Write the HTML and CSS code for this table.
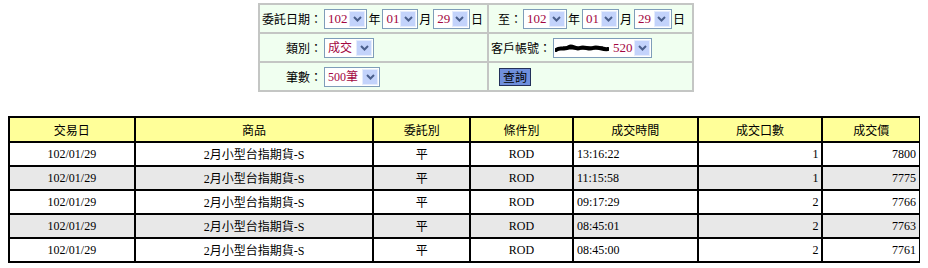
FILE: index.html
```html
<!DOCTYPE html>
<html lang="zh-Hant">
<head>
<meta charset="utf-8">
<title>成交查詢</title>
<link rel="stylesheet" href="styles.css">
</head>
<body>
<div class="form">
  <div class="fcell">
    <span class="lbl">委託日期：</span>
    <span class="sel w45"><span class="val">102</span><span class="dd"><svg width="9" height="6" viewBox="0 0 9 6"><path d="M1 1 L4.5 4.5 L8 1" fill="none" stroke="#4a5f8c" stroke-width="2"/></svg></span></span><span class="unit">年</span>
    <span class="sel w37"><span class="val">01</span><span class="dd"><svg width="9" height="6" viewBox="0 0 9 6"><path d="M1 1 L4.5 4.5 L8 1" fill="none" stroke="#4a5f8c" stroke-width="2"/></svg></span></span><span class="unit">月</span>
    <span class="sel w38"><span class="val">29</span><span class="dd"><svg width="9" height="6" viewBox="0 0 9 6"><path d="M1 1 L4.5 4.5 L8 1" fill="none" stroke="#4a5f8c" stroke-width="2"/></svg></span></span><span class="unit">日</span>
  </div>
  <div class="fcell end">
    <span class="lbl2">至：</span>
    <span class="sel w44"><span class="val">102</span><span class="dd"><svg width="9" height="6" viewBox="0 0 9 6"><path d="M1 1 L4.5 4.5 L8 1" fill="none" stroke="#4a5f8c" stroke-width="2"/></svg></span></span><span class="unit">年</span>
    <span class="sel w37"><span class="val">01</span><span class="dd"><svg width="9" height="6" viewBox="0 0 9 6"><path d="M1 1 L4.5 4.5 L8 1" fill="none" stroke="#4a5f8c" stroke-width="2"/></svg></span></span><span class="unit">月</span>
    <span class="sel w38"><span class="val">29</span><span class="dd"><svg width="9" height="6" viewBox="0 0 9 6"><path d="M1 1 L4.5 4.5 L8 1" fill="none" stroke="#4a5f8c" stroke-width="2"/></svg></span></span><span class="unit">日</span>
  </div>
  <div class="fcell">
    <span class="lbl">類別：</span>
    <span class="sel w50"><span class="val cjk">成交</span><span class="dd"><svg width="9" height="6" viewBox="0 0 9 6"><path d="M1 1 L4.5 4.5 L8 1" fill="none" stroke="#4a5f8c" stroke-width="2"/></svg></span></span>
  </div>
  <div class="fcell">
    <span class="lbl">客戶帳號：</span>
    <span class="sel w99"><span class="val acct"><svg class="redact" width="54" height="10" viewBox="0 0 54 10"><path d="M1 7 C6 3 9 8 14 4 C18 2 20 7 25 5 C30 3 33 7 38 5 C43 3 47 7 53 6" fill="none" stroke="#000" stroke-width="4" stroke-linecap="round"/><path d="M8 5 L48 5" stroke="#000" stroke-width="3"/></svg><span>520</span></span><span class="dd"><svg width="9" height="6" viewBox="0 0 9 6"><path d="M1 1 L4.5 4.5 L8 1" fill="none" stroke="#4a5f8c" stroke-width="2"/></svg></span></span>
  </div>
  <div class="fcell">
    <span class="lbl">筆數：</span>
    <span class="sel w56"><span class="val cjk">500筆</span><span class="dd"><svg width="9" height="6" viewBox="0 0 9 6"><path d="M1 1 L4.5 4.5 L8 1" fill="none" stroke="#4a5f8c" stroke-width="2"/></svg></span></span>
  </div>
  <div class="fcell">
    <button class="btn" type="button">查詢</button>
  </div>
</div>

<table class="grid">
  <colgroup>
    <col class="c1"><col class="c2"><col class="c3"><col class="c4"><col class="c5"><col class="c6"><col class="c7">
  </colgroup>
  <thead>
    <tr><th>交易日</th><th>商品</th><th>委託別</th><th>條件別</th><th>成交時間</th><th>成交口數</th><th>成交價</th></tr>
  </thead>
  <tbody>
    <tr><td class="ctr">102/01/29</td><td class="ctr">2月小型台指期貨-S</td><td class="ctr">平</td><td class="ctr">ROD</td><td>13:16:22</td><td class="rt">1</td><td class="rt">7800</td></tr>
    <tr class="alt"><td class="ctr">102/01/29</td><td class="ctr">2月小型台指期貨-S</td><td class="ctr">平</td><td class="ctr">ROD</td><td>11:15:58</td><td class="rt">1</td><td class="rt">7775</td></tr>
    <tr><td class="ctr">102/01/29</td><td class="ctr">2月小型台指期貨-S</td><td class="ctr">平</td><td class="ctr">ROD</td><td>09:17:29</td><td class="rt">2</td><td class="rt">7766</td></tr>
    <tr class="alt"><td class="ctr">102/01/29</td><td class="ctr">2月小型台指期貨-S</td><td class="ctr">平</td><td class="ctr">ROD</td><td>08:45:01</td><td class="rt">2</td><td class="rt">7763</td></tr>
    <tr><td class="ctr">102/01/29</td><td class="ctr">2月小型台指期貨-S</td><td class="ctr">平</td><td class="ctr">ROD</td><td>08:45:00</td><td class="rt">2</td><td class="rt">7761</td></tr>
  </tbody>
</table>
</body>
</html>
```

FILE: styles.css
```css
body {
  margin: 3px 8px 8px 8px;
  background: #fff;
  font-family: "Liberation Serif", "Noto Sans CJK TC", serif;
  font-size: 12px;
  color: #000;
}

.form {
  display: grid;
  grid-template-columns: 227px 203px;
  grid-auto-rows: 27px;
  gap: 2px;
  padding: 2px;
  width: fit-content;
  background: #c4c6c4;
  margin-left: 250px;
}

.fcell {
  background: #f0fff0;
  display: flex;
  align-items: center;
  padding: 0 2px;
  font-family: "Noto Sans CJK TC", sans-serif;
  font-size: 12px;
  white-space: nowrap;
}

.fcell.end {
  justify-content: flex-end;
  padding-right: 5px;
}

.lbl {
  width: 60px;
  text-align: right;
  margin-right: 2px;
}

.lbl2 {
  margin-right: 1px;
}

.unit {
  margin: 0 2px 0 1px;
}

.sel {
  display: inline-flex;
  align-items: center;
  justify-content: space-between;
  box-sizing: border-box;
  height: 20px;
  border: 1px solid #7f9db9;
  background: #fff;
  padding-right: 1px;
}

.w37 { width: 37px; }
.w38 { width: 38px; }
.w44 { width: 44px; }
.w45 { width: 45px; }
.w50 { width: 50px; }
.w56 { width: 56px; }
.w99 { width: 99px; }

.val {
  padding-left: 3px;
  color: #a3063f;
  font-family: "Liberation Serif", serif;
  font-size: 13px;
  line-height: 16px;
}

.val.cjk {
  font-family: "Liberation Serif", "Noto Sans CJK TC", serif;
  font-size: 12px;
}

.acct {
  display: inline-flex;
  align-items: center;
  padding-left: 1px;
}

.redact {
  margin-right: 4px;
}

.dd {
  display: inline-flex;
  align-items: center;
  justify-content: center;
  box-sizing: border-box;
  width: 16px;
  height: 16px;
  background: #c3d3fb;
  border: 1px solid #e4ecfd;
}

.btn {
  margin-left: 8px;
  padding: 0 3px;
  height: 18px;
  background: #6f8fdc;
  border: 1px solid #23305a;
  color: #000;
  font-family: "Noto Sans CJK TC", sans-serif;
  font-size: 12px;
  line-height: 15px;
}

.grid {
  border-collapse: collapse;
  table-layout: fixed;
  width: 913px;
  margin-top: 24px;
}

.c1 { width: 13.8%; }
.c2 { width: 26.2%; }
.c3 { width: 10.6%; }
.c4 { width: 11.3%; }
.c5 { width: 13.7%; }
.c6 { width: 13.7%; }
.c7 { width: 10.7%; }

.grid th,
.grid td {
  border: 2px solid #000;
  padding: 0 3px;
  white-space: nowrap;
}

.grid th {
  height: 23px;
  background: #ffff99;
  font-weight: normal;
  font-family: "Noto Sans CJK TC", sans-serif;
  text-align: center;
}

.grid td {
  height: 22px;
  background: #fff;
  text-align: left;
}

.grid tr.alt td {
  background: #e8e8e8;
}

.grid td.ctr { text-align: center; }
.grid td.rt { text-align: right; }
```
